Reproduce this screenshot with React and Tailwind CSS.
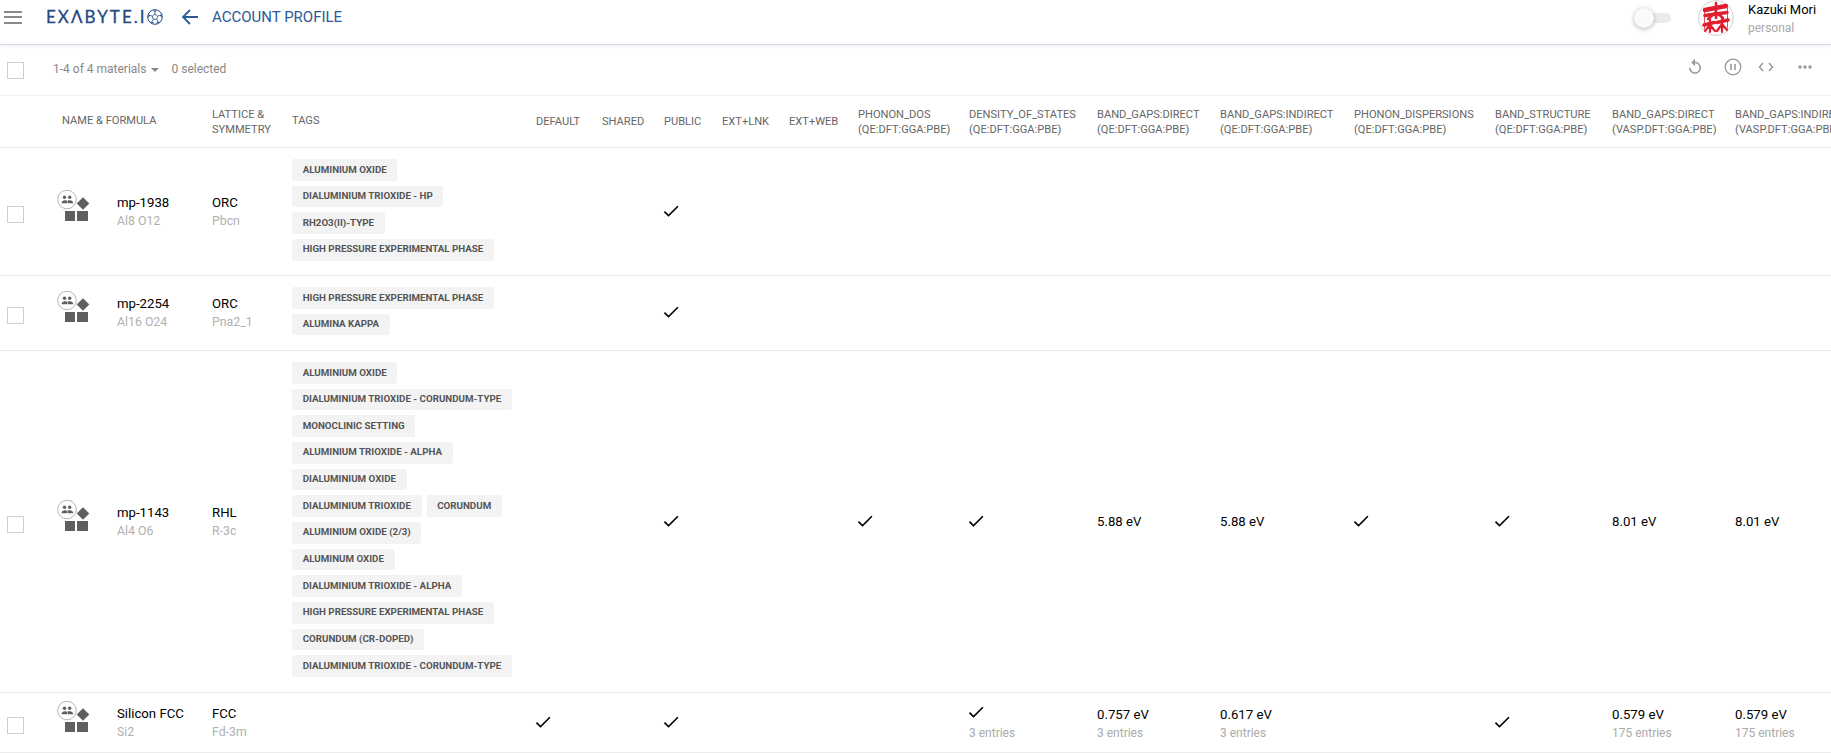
import React from "react";

const GRID = "grid grid-cols-[47px_70px_95px_80px_244px_66px_62px_58px_67px_69px_111px_128px_123px_134px_141px_117px_123px_140px] w-[1875px]";

const Check = ({ className = "" }) => (
  <svg width="20" height="20" viewBox="0 0 24 24" className={className} fill="#000">
    <path d="M9 16.17L4.83 12l-1.42 1.41L9 19 21 7l-1.41-1.41z" />
  </svg>
);

const Box = () => <div className="w-[17px] h-[17px] border border-[#cfcfcf] bg-white" />;

const MatIcon = () => (
  <svg width="33" height="31" viewBox="0 0 33 31" className="block">
    <circle cx="10" cy="9.5" r="9.3" fill="#fff" stroke="#b5b5b5" strokeWidth="1" />
    <g fill="#5f5f5f">
      <circle cx="7.500" cy="7.300" r="1.700" />
      <circle cx="12.700" cy="7.300" r="1.700" />
      <path d="M4.500 13.200c0-1.700 1.900-3 3.300-3s2.700.6 2.700 2v1z" />
      <path d="M11 13.200v-1c0-.7-.3-1.200-.7-1.600.9-.3 2-.4 2.700-.4 1.300 0 3.300 1.300 3.300 3z" />
      <rect x="8" y="21" width="10" height="10" />
      <rect x="20" y="21" width="11" height="10" />
      <path d="M26 7.200l6.300 6.300L26 19.800l-6.300-6.300z" />
    </g>
  </svg>
);

const Chip = ({ children }) => (
  <span className="inline-flex items-center h-[21.67px] mb-[5px] px-[10.67px] rounded-[2px] bg-[#f3f3f3] text-[#555] text-[9.75px] font-bold uppercase whitespace-nowrap">
    {children}
  </span>
);

const Tags = ({ items }) => (
  <div className="flex flex-wrap w-[225px] gap-x-[5px] pt-[11px]">
    {items.map((t, i) => <Chip key={i}>{t}</Chip>)}
  </div>
);

const HeadCell = ({ children }) => (
  <div className="flex flex-col justify-center leading-[15px] whitespace-nowrap">{children}</div>
);

const Val = ({ v, sub }) => {
  if (v === true) {
    return (
      <div className="flex flex-col justify-center whitespace-nowrap">
        <Check className="-ml-[3px] -mt-[2px]" />
        {sub ? <span className="text-[12px] leading-[18px] mt-[2px] text-[#aaa]">{sub}</span> : null}
      </div>
    );
  }
  return (
    <div className={"flex flex-col justify-center whitespace-nowrap " + (sub ? "pt-[3px]" : "")}>
      <span className="text-[13.2px] leading-[18px] text-[#000]">{v}</span>
      {sub ? <span className="text-[12px] leading-[18px] text-[#aaa]">{sub}</span> : null}
    </div>
  );
};

const Row = ({ name, formula, lat, sym, tags, vals, h }) => (
  <div className={GRID + " border-b border-[#ececec] " + h}>
    <div className="flex items-center pl-[7px] pt-[5px]"><Box /></div>
    <div className="flex items-center pl-[10px] pb-[13px]"><MatIcon /></div>
    <div className="flex flex-col justify-center">
      <span className="text-[13.2px] leading-[18px] text-[#000] whitespace-nowrap">{name}</span>
      <span className="text-[12.3px] leading-[18px] text-[#b0b0b0]">{formula}</span>
    </div>
    <div className="flex flex-col justify-center">
      <span className="text-[13.2px] leading-[18px] text-[#000]">{lat}</span>
      <span className="text-[12.3px] leading-[18px] text-[#b0b0b0]">{sym}</span>
    </div>
    <div className="flex items-start"><Tags items={tags} /></div>
    {vals.map((v, i) => (
      <div key={i} className="flex items-center">
        {v ? <Val v={v.v} sub={v.sub} /> : null}
      </div>
    ))}
  </div>
);

const c = { v: true };
const n = null;

const rows = [
  {
    name: "mp-1938", formula: "Al8 O12", lat: "ORC", sym: "Pbcn", h: "h-[128px]",
    tags: ["Aluminium Oxide", "Dialuminium trioxide - HP", "Rh2O3(II)-type", "High pressure experimental phase"],
    vals: [n, n, c, n, n, n, n, n, n, n, n, n, n],
  },
  {
    name: "mp-2254", formula: "Al16 O24", lat: "ORC", sym: "Pna2_1", h: "h-[75px]",
    tags: ["High pressure experimental phase", "Alumina kappa"],
    vals: [n, n, c, n, n, n, n, n, n, n, n, n, n],
  },
  {
    name: "mp-1143", formula: "Al4 O6", lat: "RHL", sym: "R-3c", h: "h-[342px]",
    tags: ["Aluminium Oxide", "Dialuminium trioxide - corundum-type", "Monoclinic setting", "Aluminium trioxide - alpha", "Dialuminium oxide", "Dialuminium trioxide", "Corundum", "Aluminium oxide (2/3)", "Aluminum oxide", "Dialuminium trioxide - alpha", "High pressure experimental phase", "Corundum (Cr-doped)", "Dialuminium trioxide - corundum-type"],
    vals: [n, n, c, n, n, c, c, { v: "5.88 eV" }, { v: "5.88 eV" }, c, c, { v: "8.01 eV" }, { v: "8.01 eV" }],
  },
  {
    name: "Silicon FCC", formula: "Si2", lat: "FCC", sym: "Fd-3m", h: "h-[60px]",
    tags: [],
    vals: [c, n, c, n, n, n, { v: true, sub: "3 entries" }, { v: "0.757 eV", sub: "3 entries" }, { v: "0.617 eV", sub: "3 entries" }, n, c, { v: "0.579 eV", sub: "175 entries" }, { v: "0.579 eV", sub: "175 entries" }],
  },
];

const heads = [
  ["DEFAULT"], ["SHARED"], ["PUBLIC"], ["EXT+LNK"], ["EXT+WEB"],
  ["PHONON_DOS", "(QE:DFT:GGA:PBE)"],
  ["DENSITY_OF_STATES", "(QE:DFT:GGA:PBE)"],
  ["BAND_GAPS:DIRECT", "(QE:DFT:GGA:PBE)"],
  ["BAND_GAPS:INDIRECT", "(QE:DFT:GGA:PBE)"],
  ["PHONON_DISPERSIONS", "(QE:DFT:GGA:PBE)"],
  ["BAND_STRUCTURE", "(QE:DFT:GGA:PBE)"],
  ["BAND_GAPS:DIRECT", "(VASP.DFT:GGA:PBE)"],
  ["BAND_GAPS:INDIRECT", "(VASP.DFT:GGA:PBE)"],
];

const Ball = () => (
  <svg width="16" height="16" viewBox="0 0 16 16" className="block" fill="none" stroke="#1f4a82" strokeWidth="0.8">
    <circle cx="8" cy="8" r="7.300" strokeWidth="1" />
    <path d="M8 5.200l2.700 1.900-1 3.100H6.300l-1-3.100z" />
    <path d="M8 5.200V3M10.700 7.100l2.100-.7M9.700 10.200l1.300 1.800M6.300 10.200L5 12M5.300 7.100l-2.100-.7" />
    <g fill="#1f4a82" stroke="none">
      <path d="M5.800 1.400h4.400L8 3z" />
      <path d="M14.300 4.800l.6 4-2.100-2.400z" />
      <path d="M12.500 13.600l-3.700.9 2.200-2.500z" />
      <path d="M3.500 13.600l3.700.9L5 12z" />
      <path d="M1.700 4.800l-.6 4 2.100-2.400z" />
    </g>
  </svg>
);

const Avatar = () => (
  <svg width="36" height="36" viewBox="0 0 36 36" className="block">
    <circle cx="18" cy="18" r="17.300" fill="#fff" stroke="#cfcfcf" strokeWidth="1" />
    <g stroke="#e11d2e" fill="none" strokeLinecap="round">
      <path d="M7 10L28 6" strokeWidth="4.500" />
      <path d="M7 15.500L29 12.500" strokeWidth="3.500" />
      <path d="M18 3v15M17 13l-7 6M19 13l6 5" strokeWidth="2.600" />
      <path d="M6 25l10-2.500M19 22.500l11-2.500" strokeWidth="3.500" />
      <path d="M12 19v13M24 18v14M12 25l-5 6M12 25l5 6M24 24l-5 7M24 24l5 6" strokeWidth="2.200" />
      <path d="M6.500 9v20M29.500 8v20" strokeWidth="0.800" />
    </g>
  </svg>
);

export default function App() {
  return (
    <div className="w-[1831px] h-[753px] overflow-hidden bg-white font-['Roboto',sans-serif]">
      {/* Top bar */}
      <div className="h-[45px] flex items-center border-b border-[#d6dcec] shadow-[0_1px_3px_rgba(0,0,0,0.08)] relative">
        <div className="w-[46px] pl-[4px] flex flex-col gap-[3.500px] -mt-[10px]">
          <div className="w-[18px] h-[2px] bg-[#8a8a8a]" />
          <div className="w-[18px] h-[2px] bg-[#8a8a8a]" />
          <div className="w-[18px] h-[2px] bg-[#8a8a8a]" />
        </div>
        <div className="flex items-center w-[135px] -mt-[10px]">
          <span className="font-['Lato',sans-serif] text-[17px] leading-[20px] tracking-[2.050px] [-webkit-text-stroke:0.3px_#1f4a82] text-[#1f4a82] whitespace-nowrap">EXΛBYTE.I</span>
          <Ball />
        </div>
        <svg width="18" height="18" viewBox="0 0 18 18" className="-mt-[10px]" fill="none" stroke="#2c5a94" strokeWidth="1.800">
          <path d="M17 9H2M9 2L2 9l7 7" />
        </svg>
        <span className="ml-[13px] -mt-[10px] text-[15px] leading-[20px] text-[#2c5a94] whitespace-nowrap">ACCOUNT PROFILE</span>
        <div className="flex-1" />
        <div className="relative w-[38px] h-[20px] -mt-[9px] mr-[26px]">
          <div className="absolute left-[7px] top-[5px] w-[30px] h-[10px] rounded-full bg-[#ececec]" />
          <div className="absolute left-0 top-0 w-[20px] h-[20px] rounded-full bg-[#fafafa] shadow-[0_1px_5px_rgba(0,0,0,0.3)]" />
        </div>
        <div className="-mt-[8px]"><Avatar /></div>
        <div className="ml-[14px] w-[83px] -mt-[7px] flex flex-col">
          <span className="text-[13px] leading-[18px] text-[#000] whitespace-nowrap">Kazuki Mori</span>
          <span className="text-[12px] leading-[18px] text-[#aaa]">personal</span>
        </div>
      </div>

      {/* Toolbar */}
      <div className="h-[51px] flex items-center border-b border-[#f0f0f0]">
        <div className="w-[53px] pl-[7px] pt-[1px]"><Box /></div>
        <span className="text-[12px] text-[#888] whitespace-nowrap pb-[2px]">1-4 of 4 materials</span>
        <span className="ml-[5px] w-0 h-0 border-x-[4px] border-x-transparent border-t-[4px] border-t-[#888]" />
        <span className="ml-[12px] text-[12px] text-[#888] whitespace-nowrap pb-[2px]">0 selected</span>
        <div className="flex-1" />
        <div className="flex items-center -mt-[6px] pr-[19px]">
          <svg width="18" height="18" viewBox="0 0 24 24" fill="#999" className="mr-[20px]">
            <path d="M12 5V1L7 6l5 5V7c3.310 0 6 2.690 6 6s-2.690 6-6 6-6-2.690-6-6H4c0 4.420 3.580 8 8 8s8-3.580 8-8-3.580-8-8-8z" />
          </svg>
          <svg width="18" height="18" viewBox="0 0 18 18" fill="none" stroke="#999" className="mr-[16px]">
            <circle cx="9" cy="9" r="7.800" strokeWidth="1.300" />
            <path d="M7 6v6M11 6v6" strokeWidth="1.600" />
          </svg>
          <svg width="16" height="12" viewBox="0 0 16 12" fill="none" stroke="#999" strokeWidth="1.500" className="mr-[24px]">
            <path d="M5 2L1.500 6 5 10M11 2l3.500 4L11 10" />
          </svg>
          <svg width="14" height="4" viewBox="0 0 14 4" fill="#999">
            <circle cx="2" cy="2" r="1.700" /><circle cx="7" cy="2" r="1.700" /><circle cx="12" cy="2" r="1.700" />
          </svg>
        </div>
      </div>

      {/* Header row */}
      <div className={GRID + " h-[52px] border-b border-[#ececec] text-[11.1px] text-[#666]"}>
        <div />
        <div className="col-span-2 flex items-center pl-[15px]">NAME &amp; FORMULA</div>
        <HeadCell><span>LATTICE &amp;</span><span>SYMMETRY</span></HeadCell>
        <div className="flex items-center">TAGS</div>
        {heads.map((h, i) => (
          <HeadCell key={i}>{h.map((l, j) => <span key={j}>{l}</span>)}</HeadCell>
        ))}
      </div>

      {rows.map((r) => <Row key={r.name} {...r} />)}
    </div>
  );
}
